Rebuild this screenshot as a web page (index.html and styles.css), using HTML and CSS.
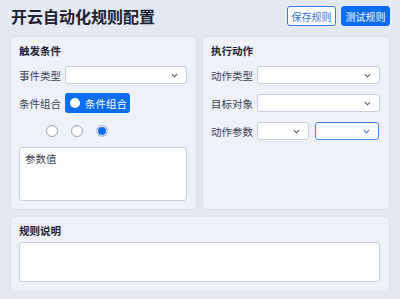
FILE: index.html
```html
<!doctype html>
<html>
<head>
 <meta charset="utf-8">
 <title>开云自动化规则配置</title>
 <link rel="stylesheet" href="styles.css">
</head>
<body>
<div class="head">
  <h1>开云自动化规则配置</h1>
  <div class="actions">
    <button class="btn btn-line">保存规则</button>
    <button class="btn btn-fill">测试规则</button>
  </div>
</div>

<div class="cols">
  <div class="panel">
    <h2>触发条件</h2>
    <div class="row">
      <span class="lbl">事件类型</span>
      <div class="sel wide"><svg class="chev" viewBox="0 0 8 5"><path d="M1 1l3 3 3-3"/></svg></div>
    </div>
    <div class="row">
      <span class="lbl">条件组合</span>
      <button class="toggle"><span class="dot"></span>条件组合</button>
    </div>
    <div class="row radios">
      <span class="radio"></span>
      <span class="radio"></span>
      <span class="radio on"></span>
    </div>
    <div class="area tall">参数值</div>
  </div>

  <div class="panel">
    <h2>执行动作</h2>
    <div class="row">
      <span class="lbl">动作类型</span>
      <div class="sel wide"><svg class="chev" viewBox="0 0 8 5"><path d="M1 1l3 3 3-3"/></svg></div>
    </div>
    <div class="row">
      <span class="lbl">目标对象</span>
      <div class="sel wide"><svg class="chev" viewBox="0 0 8 5"><path d="M1 1l3 3 3-3"/></svg></div>
    </div>
    <div class="row">
      <span class="lbl">动作参数</span>
      <div class="sel half"><svg class="chev" viewBox="0 0 8 5"><path d="M1 1l3 3 3-3"/></svg></div>
      <div class="sel half focus"><svg class="chev" viewBox="0 0 8 5"><path d="M1 1l3 3 3-3"/></svg></div>
    </div>
  </div>
</div>

<div class="panel full">
  <h2>规则说明</h2>
  <div class="area short"></div>
</div>
</body>
</html>
```

FILE: styles.css
```css
  body, html {
    font-family: "Noto Sans CJK SC", "Noto Sans", sans-serif;
    margin: 0;
  }
  html { background: #e3e8f1; }
  body { padding: 5px 11px 0; }
  .head {
    display: flex;
    align-items: center;
    justify-content: space-between;
    height: 22px;
    margin-bottom: 10px;
  }
  h1 {
    margin: 0;
    font-size: 16px;
    line-height: 22px;
    font-weight: 700;
    color: #1c2233;
  }
  .actions { display: flex; gap: 5px; margin-right: -1px; }
  .btn {
    height: 20px;
    width: 49px;
    padding: 0;
    font-family: inherit;
    font-size: 10px;
    border-radius: 3px;
    border: 1px solid #2f7cf0;
  }
  .btn-line { background: #fff; color: #2f6fd6; }
  .btn-fill { background: #0a6cf0; color: #fff; border-color: #0a6cf0; }
  .cols {
    display: grid;
    grid-template-columns: 185px 186px;
    gap: 7px;
  }
  .panel {
    background: #eef1f7;
    border-radius: 4px;
    padding: 7px 9px 8px 8px;
    display: flex;
    flex-direction: column;
    gap: 8px;
    box-shadow: 0 0 2px rgba(160, 175, 200, 0.35);
  }
  h2 {
    margin: 0 0 -1px;
    font-size: 10.5px;
    line-height: 14px;
    font-weight: 700;
    color: #1c2233;
  }
  .row {
    display: flex;
    align-items: center;
    height: 20px;
    gap: 6px;
  }
  .lbl {
    width: 40px;
    font-size: 10.5px;
    color: #3a4152;
    white-space: nowrap;
  }
  .sel {
    position: relative;
    height: 18px;
    background: #fff;
    border: 1px solid #c7cddb;
    border-radius: 3px;
    box-sizing: border-box;
  }
  .sel.wide { flex: 1; }
  .sel.half { width: 52px; }
  .sel.half.focus { width: 64px; border-color: #3d86f2; }
  .chev {
    position: absolute;
    right: 8px;
    top: 6px;
    width: 7px;
    height: 5px;
    fill: none;
    stroke: #4a5163;
    stroke-width: 1.2;
  }
  .focus .chev { stroke: #2f6fd6; }
  .toggle {
    display: flex;
    align-items: center;
    gap: 5px;
    height: 20px;
    width: 65px;
    padding: 0 0 0 5px;
    background: #0a6cf0;
    border: none;
    border-radius: 3px;
    color: #fff;
    font-family: inherit;
    font-size: 10.5px;
  }
  .dot {
    width: 10px;
    height: 10px;
    border-radius: 50%;
    background: #fff;
  }
  .radios { gap: 13px; padding-left: 27px; }
  .radio {
    width: 10px;
    height: 10px;
    border-radius: 50%;
    border: 1px solid #9aa3b3;
    background: #fff;
  }
  .radio.on {
    background: #0a6cf0;
    border-color: #c9ceda;
    box-shadow: inset 0 0 0 1px #fff;
  }
  .area {
    background: #fff;
    border: 1px solid #c7cddb;
    border-radius: 3px;
    box-sizing: border-box;
    font-size: 10.5px;
    color: #3a4152;
    padding: 3px 5px;
  }
  .area.tall { height: 54px; margin-top: -2px; }
  .panel.full { margin-top: 8px; gap: 5px; padding-bottom: 9px; }
  .area.short { height: 40px; }
```
